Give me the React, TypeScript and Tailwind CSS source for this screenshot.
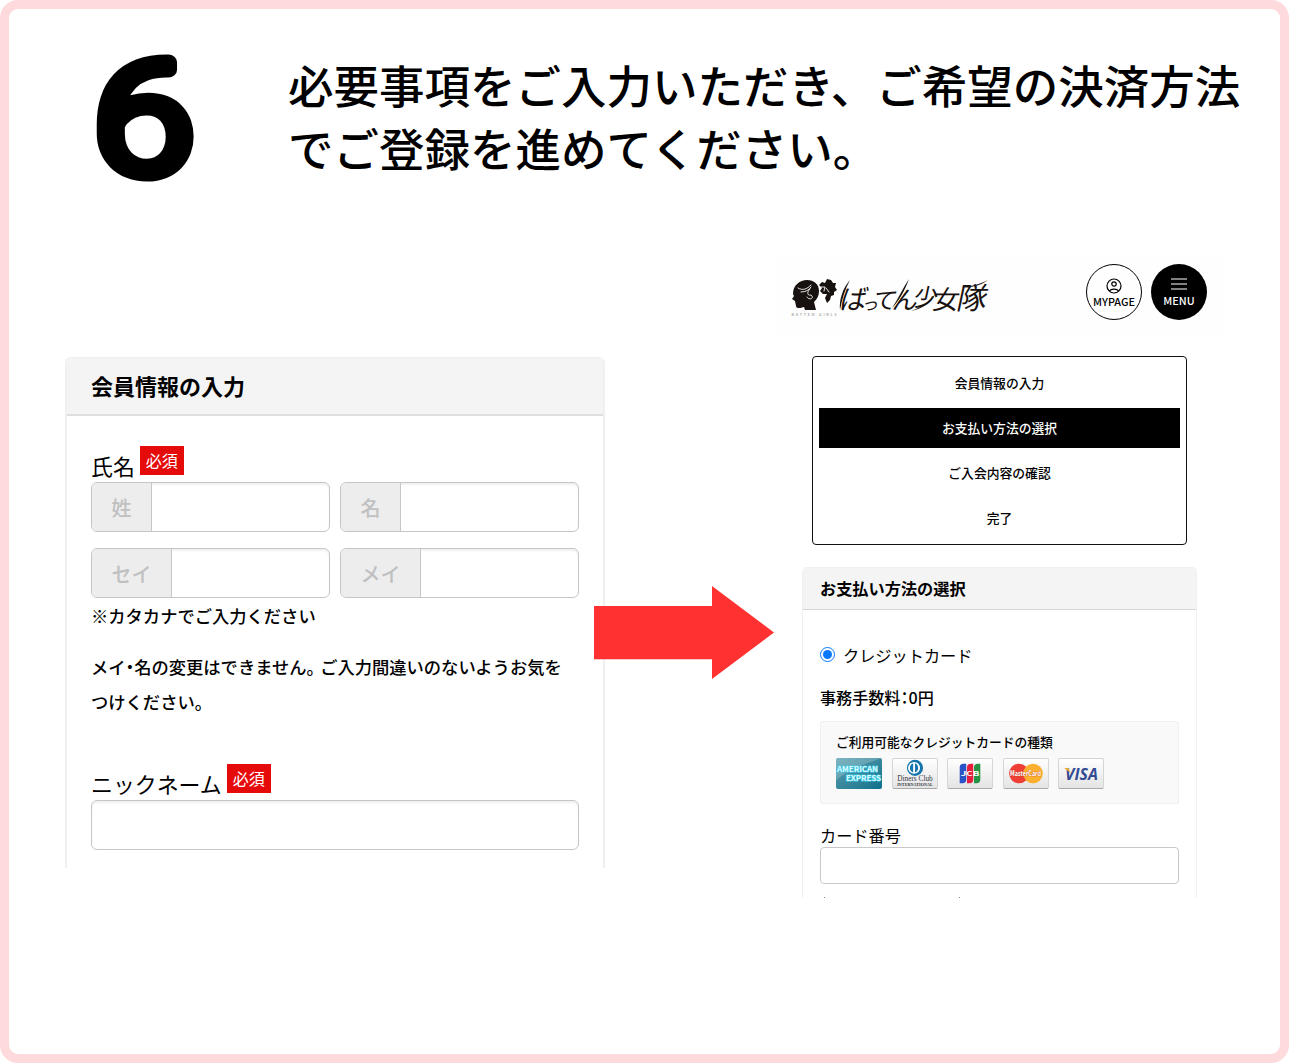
import type { ReactNode } from 'react';

interface PrefixInputProps {
  prefix: string;
  prefixClass: string;
}

const steps = ['会員情報の入力', 'お支払い方法の選択', 'ご入会内容の確認', '完了'];
const activeStep = 1;

function RequiredBadge() {
  return (
    <span className="flex h-[29px] w-11 items-center justify-center bg-[#e60b0b] pb-px text-[16px] leading-none text-white">
      必須
    </span>
  );
}

function FieldLabel({ children }: { children: ReactNode }) {
  return (
    <div className="flex h-9 items-start gap-[5px]">
      <span className="mt-1 text-[21.9px] leading-[32px]">{children}</span>
      <RequiredBadge />
    </div>
  );
}

function PrefixInput({ prefix, prefixClass }: PrefixInputProps) {
  return (
    <div className="flex h-[50px] overflow-hidden rounded-[6px] border-[1.5px] border-[#c6c6c6] shadow-[inset_0_2px_2px_rgba(0,0,0,0.06)]">
      <span
        className={`flex items-center justify-center border-r border-[#c6c6c6] bg-[#ededed] pt-px text-[20px] font-medium text-[#bfc0c1] ${prefixClass}`}
      >
        {prefix}
      </span>
    </div>
  );
}

function MemberForm() {
  return (
    <section className="mt-[102px] h-[511px] w-[540px] rounded-t-[6px] border-x-2 border-t border-[#f0f0f4]">
      <h2 className="flex h-[58px] items-center rounded-t-[5px] border-b-2 border-[#dedede] bg-[#f4f4f4] pb-[2px] pl-6 text-[22px] font-bold">
        会員情報の入力
      </h2>
      <div className="px-6 pt-[30px]">
        <FieldLabel>氏名</FieldLabel>
        <div className="grid grid-cols-[239px_239px] gap-x-[10px] gap-y-4">
          <PrefixInput prefix="姓" prefixClass="w-[60px]" />
          <PrefixInput prefix="名" prefixClass="w-[60px]" />
          <PrefixInput prefix="セイ" prefixClass="w-[80px]" />
          <PrefixInput prefix="メイ" prefixClass="w-[80px]" />
        </div>
        <p className="mt-[3px] text-[17.3px] font-medium leading-[30px]">※カタカナでご入力ください</p>
        <p className="mt-[18px] whitespace-nowrap text-[17.3px] font-medium leading-[35px] [font-feature-settings:'halt']">
          メイ・名の変更はできません。
          <span className="ml-[5px]">ご入力間違いのないようお気を</span>
          <br />
          つけください。
        </p>
        <div className="mt-[45px]">
          <FieldLabel>ニックネーム</FieldLabel>
          <div className="h-[50px] w-[488px] rounded-[6px] border-[1.5px] border-[#c6c6c6] shadow-[inset_0_2px_2px_rgba(0,0,0,0.06)]" />
        </div>
      </div>
    </section>
  );
}

function Arrow() {
  return (
    <svg className="relative -ml-[11px] mt-[331px] h-[93px] w-[180px] shrink-0" viewBox="0 0 180 93">
      <path d="M0 20H118V0L180 46.5L118 93V73.3H0Z" fill="#ff3131" />
    </svg>
  );
}

function Logo() {
  return (
    <svg className="h-[50px] w-[204px]" viewBox="0 0 204 50">
      {/* girl in profile with a hair ornament */}
      <path
        d="M3 20C3 11 10 6 17 6C24 6 29 10 29 17C29 22 27 25 24 28L26 36H15L14 33C11 34 6 35 6 32L5 27L2 25L4 22Z"
        fill="#17120f"
      />
      <path
        d="M29 11L32 8L35 9L37 5L41 6L43 9L46 9L45 13L47 16L44 18L44 21L41 22L40 26L37 29L35 24L37 20L33 20L30 17L32 14Z"
        fill="#17120f"
      />
      <path
        d="M8 14C13 17 17 15 21 11M11 18C16 18 19 16 21 13M20 15C16 19 18 22 21 21C25 24 19 27 17 23M31 13L35 13L34 17M36 14L39 18"
        fill="none"
        stroke="#fff"
        strokeWidth="0.9"
        strokeLinecap="round"
      />
      <text x="1.5" y="42" fontSize="3.8" textLength="45" fill="#777">
        BATTEN GIRLS
      </text>
      <g fill="#17120f" fontWeight="400" transform="skewX(-12)">
        <text x="56" y="35" fontSize="27">ば</text>
        <text x="79" y="36" fontSize="17">っ</text>
        <text x="89" y="35" fontSize="24">て</text>
        <text x="109" y="35" fontSize="25">ん</text>
        <text x="129" y="32" fontSize="24">少</text>
        <text x="149" y="35" fontSize="26">女</text>
        <text x="173" y="35" fontSize="30">隊</text>
      </g>
      {/* brush tails */}
      <g fill="#17120f">
        <path d="M60 6C53 14 49 25 50 36C52 25 55 15 60 6Z" />
        <path d="M121 37C132 35 141 29 146 19C139 28 132 33 121 37Z" />
        <path d="M119 5C113 14 108 25 102 34C109 27 115 16 119 5Z" />
        <path d="M171 13C181 13 190 10 198 6C190 12 181 14 171 13Z" />
      </g>
    </svg>
  );
}

function SiteHeader() {
  return (
    <header className="flex h-[82px] items-start bg-[#fefefe]">
      <div className="ml-[12px] mt-[19px]">
        <Logo />
      </div>
      <div className="ml-[92px] mt-[9px] flex gap-[9px] text-[10.8px] font-medium leading-none">
        <div className="flex size-14 flex-col items-center rounded-full border-[1.3px] border-black pt-[13px]">
          <svg className="size-4" viewBox="0 0 16 16" fill="none" stroke="black" strokeWidth="1.2">
            <circle cx="8" cy="8" r="7" />
            <circle cx="8" cy="6" r="2.2" />
            <path d="M3.3 13C5 10.4 11 10.4 12.7 13" />
          </svg>
          <span className="mt-[2px]">MYPAGE</span>
        </div>
        <div className="flex size-14 flex-col items-center rounded-full bg-black pt-[14px] text-white">
          <svg className="h-3 w-4" viewBox="0 0 16 12" stroke="white" strokeWidth="1.2">
            <path d="M0 1H16M0 6H16M0 11H16" />
          </svg>
          <span className="mt-[5px]">MENU</span>
        </div>
      </div>
    </header>
  );
}

function StepList() {
  return (
    <ol className="ml-[34px] mt-[19px] flex h-[189px] w-[375px] flex-col gap-[5px] rounded-[4px] border-[1.5px] border-[#111] px-[6px] pt-[6px] text-[12.8px] font-medium">
      {steps.map((step, i) => (
        <li
          key={step}
          className={`flex h-10 items-center justify-center ${i === activeStep ? 'bg-black text-white' : ''}`}
        >
          {step}
        </li>
      ))}
    </ol>
  );
}

function CardBrands() {
  const frame = 'h-[31px] w-[46px] rounded-[2px]';
  const plate = `${frame} border border-[#d5d5d5] border-b-[#aaa] bg-linear-to-b from-white to-[#e4e4e4]`;

  return (
    <div className="mt-[6px] flex gap-[9.5px]">
      <svg className={`${frame} bg-linear-to-br from-[#5ba0b0] to-[#08718a]`} viewBox="0 0 46 31">
        <path d="M0 0H46C36 4 20 7 0 22Z" fill="#fff" opacity="0.2" />
        <g fill="#d8faff" stroke="#43cdea" strokeWidth="1.2" paintOrder="stroke" fontSize="7.6" fontWeight="700">
          <text x="1" y="14" textLength="41" lengthAdjust="spacingAndGlyphs">AMERICAN</text>
          <text x="10" y="23" textLength="35" lengthAdjust="spacingAndGlyphs">EXPRESS</text>
        </g>
      </svg>
      <svg className={plate} viewBox="0 0 46 31">
        <circle cx="23" cy="9.5" r="8.6" fill="#1676ac" />
        <circle cx="22" cy="9.5" r="6.4" fill="#fff" />
        <path d="M21 4.5C16.5 6 16.5 13 21 14.5ZM23 4.5C27.5 6 27.5 13 23 14.5Z" fill="#1676ac" />
        <g fill="#343943" fontFamily="Liberation Serif, serif">
          <text x="4" y="23.5" fontSize="8.5" textLength="38" lengthAdjust="spacingAndGlyphs">Diners Club</text>
          <text x="4" y="28.5" fontSize="4.4" fontWeight="700" textLength="38" lengthAdjust="spacingAndGlyphs">INTERNATIONAL</text>
        </g>
      </svg>
      <svg className={plate} viewBox="0 0 46 31">
        <path d="M12 26V9Q12 5 16 5H19V22Q19 26 15 26Z" fill="#2852c5" />
        <path d="M19.8 26V9Q19.8 5 23.8 5H26.5V22Q26.5 26 22.5 26Z" fill="#e51f3e" />
        <path d="M27.3 26V9Q27.3 5 31.3 5H34V22Q34 26 30 26Z" fill="#259344" />
        <text x="13" y="18" fontSize="7" fontWeight="700" fill="#fff" textLength="20" lengthAdjust="spacingAndGlyphs">JCB</text>
      </svg>
      <svg className={plate} viewBox="0 0 46 31">
        <circle cx="15.5" cy="15.5" r="10.5" fill="#ee3e35" />
        <circle cx="30.5" cy="15.5" r="10.5" fill="#fbb02f" />
        <text
          x="6" y="18.5" fontSize="7.5" fontWeight="700" fill="#fff"
          stroke="#c64a20" strokeWidth="0.6" paintOrder="stroke" textLength="33" lengthAdjust="spacingAndGlyphs"
        >
          MasterCard
        </text>
      </svg>
      <svg className={plate} viewBox="0 0 46 31">
        <text
          x="6" y="22" fontSize="17" fontWeight="700" fontStyle="italic" fill="#344b94"
          fontFamily="Open Sans, sans-serif" textLength="35" lengthAdjust="spacingAndGlyphs"
        >
          VISA
        </text>
        <path d="M5 9.7H9.5L12 15Z" fill="#efaa38" />
      </svg>
    </div>
  );
}

function PaymentForm() {
  return (
    <section className="ml-6 mt-[22px] h-[331px] w-[395px] overflow-hidden rounded-t-[5px] border-x-[1.5px] border-t border-[#f0f0f2]">
      <h2 className="flex h-[42px] items-center border-b border-[#d5d5d5] bg-[#f4f4f4] pl-[17px] text-[16.2px] font-bold">
        お支払い方法の選択
      </h2>
      <div className="pl-[17px]">
        <div className="mt-[33px] flex h-6 items-center gap-2">
          <span className="mb-px flex size-[15px] items-center justify-center rounded-full border-[1.5px] border-[#0878ff] bg-white">
            <span className="size-[9px] rounded-full bg-[#0878ff]" />
          </span>
          <span className="text-[16.2px]">クレジットカード</span>
        </div>
        <p className="mt-[18px] text-[16.1px] font-medium leading-6 [font-feature-settings:'halt']">事務手数料：0円</p>
        <div className="mt-3 h-[83px] w-[359px] rounded-[2px] border border-[#f0f0f0] bg-[#f9f9f9] pl-[15px] pt-[10px]">
          <p className="text-[12.75px] font-medium leading-5">ご利用可能なクレジットカードの種類</p>
          <CardBrands />
        </div>
        <p className="mt-[19px] text-[16.2px] leading-6">カード番号</p>
        <div className="h-[37px] w-[359px] rounded-[4px] border-[1.5px] border-[#c8c8c8]" />
        <div className="ml-1 mt-[13px] flex gap-[134px]">
          <span className="size-px bg-[#888]" />
          <span className="size-px bg-[#888]" />
        </div>
      </div>
    </section>
  );
}

export default function App() {
  return (
    <div className="h-[1063px] w-[1289px] bg-white">
      <main className="flex h-full flex-col overflow-hidden rounded-[18px] border-[9px] border-[#ffdadd] bg-white font-['Noto_Sans_CJK_JP',sans-serif] text-black">
        <div className="flex h-[246px]">
          <svg className="ml-[77px] mt-[23px] h-[200px] w-[120px] overflow-visible" viewBox="0 0 120 200">
            <text
              transform="translate(8 141) scale(1.17 1)"
              fontSize="154"
              fontWeight="300"
              fontFamily="Roboto, sans-serif"
              stroke="black"
              strokeWidth="15"
              strokeLinejoin="round"
            >
              6
            </text>
          </svg>
          <h1 className="ml-[82px] mt-[44px] whitespace-nowrap text-[45.5px] font-medium leading-[62.5px]">
            必要事項をご入力いただき、ご希望の決済方法
            <br />
            でご登録を進めてください。
          </h1>
        </div>
        <div className="flex items-start pl-14">
          <MemberForm />
          <Arrow />
          <div className="ml-1 w-[446px] shrink-0">
            <SiteHeader />
            <StepList />
            <PaymentForm />
          </div>
        </div>
      </main>
    </div>
  );
}
